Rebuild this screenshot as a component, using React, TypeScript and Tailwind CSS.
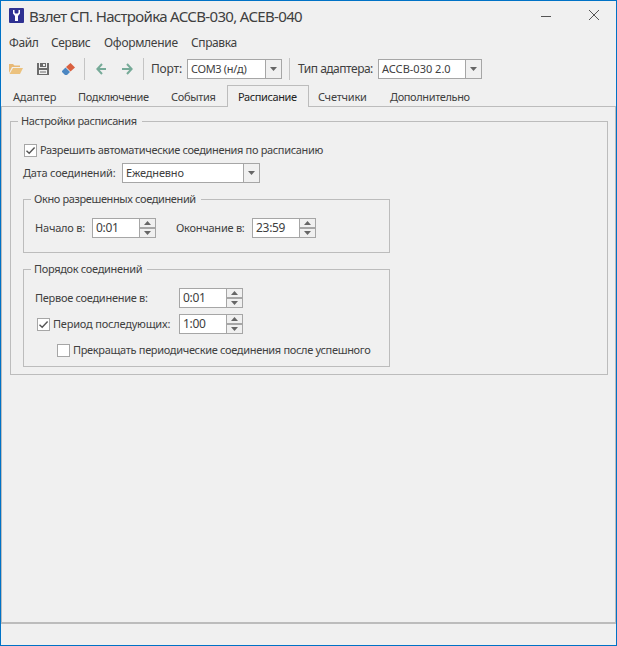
import type { ReactNode } from "react";
import clsx from "clsx";

const Arrow = ({ up }: { up?: boolean }) => (
  <svg width="7" height="4" viewBox="0 0 7 4" className="block shrink-0">
    <path d={up ? "M0 4L3.5 0L7 4Z" : "M0 0H7L3.5 4Z"} fill="#666" />
  </svg>
);

function Combo({ value, className }: { value: string; className: string }) {
  return (
    <div className={clsx("flex h-5 shrink-0 border border-[#a6a6a6] bg-white", className)}>
      <span className="flex-1 whitespace-nowrap pl-[3px] leading-[18px]">{value}</span>
      <span className="flex w-[16px] items-center justify-center border-l border-[#a6a6a6] bg-[#f0f0f0]"><Arrow /></span>
    </div>
  );
}

function Spinner({ value }: { value: string }) {
  return (
    <div className="flex h-5 w-16 shrink-0 border border-[#a6a6a6] bg-white">
      <span className="flex-1 pl-[3px] text-[12px] leading-[18px] tracking-[-0.3px]">{value}</span>
      <span className="flex w-[16px] flex-col border-l border-[#a6a6a6] bg-[#a6a6a6]">
        <span className="flex h-2 items-center justify-center bg-[#f0f0f0]"><Arrow up /></span>
        <span className="mt-[2px] flex h-2 items-center justify-center bg-[#f0f0f0]"><Arrow /></span>
      </span>
    </div>
  );
}

function Check({ on }: { on?: boolean }) {
  return (
    <span className="block size-[13px] shrink-0 border border-[#a6a6a6] bg-white">
      {on && (
        <svg width="11" height="11" viewBox="0 0 11 11" className="block">
          <path d="M1.5 5.7L4.2 8.3L9.6 2.6" fill="none" stroke="#555" strokeWidth="1.4" />
        </svg>
      )}
    </span>
  );
}

function Group({ title, className, legend, children }: { title: string; className: string; legend: string; children: ReactNode }) {
  return (
    <section className={clsx("border border-[#bcbcbc]", className)}>
      <div className={clsx("-mt-[10px] ml-[7px] h-[18px] whitespace-nowrap bg-[#f0f0f0] pl-[3px] leading-[18px]", legend)}>{title}</div>
      {children}
    </section>
  );
}

const tabs = [
  { name: "Адаптер", box: "w-[66px] pl-[12px] tracking-[-0.15px]" },
  { name: "Подключение", box: "w-[94px] pl-[11px]" },
  { name: "События", box: "w-[66px] pl-[10px]" },
  { name: "Расписание", box: "w-[82px] pl-[10px] tracking-[-0.4px]", active: true },
  { name: "Счетчики", box: "w-[71px] pl-[9px] tracking-[-0.2px]" },
  { name: "Дополнительно", box: "pl-[10px] flex-1 tracking-[-0.38px]" },
];

export default function App() {
  return (
    <main className="flex h-[646px] w-[617px] flex-col border border-[#0072c6] bg-[#f0f0f0] font-['Noto_Sans',sans-serif] text-[11px] tracking-[-0.32px] text-[#404040]">
      <header className="flex h-[31px] items-center pb-[2px] pl-2">
        <svg width="15" height="15" viewBox="0 0 15 15" className="shrink-0">
          <rect width="15" height="15" rx="1" fill="#2e3192" />
          <path d="M4 2H5.5V4.6L6.3 5.4H8.7L9.5 4.6V2H11V5.6L9 8V13H6V8L4 5.6Z" fill="#fff" />
        </svg>
        <h1 className="ml-[5px] w-[500px] whitespace-nowrap text-[15px] leading-5 tracking-[-0.67px]">Взлет СП. Настройка АССВ-030, АСЕВ-040</h1>
        <svg width="70" height="12" viewBox="0 0 70 12" className="shrink-0" fill="none" stroke="#555">
          <path d="M12 6.5H22" />
          <path d="M70 0L60 10M60 0L70 10" />
        </svg>
      </header>
      <nav className="flex h-[22px] items-center pl-2 text-[12px] tracking-[-0.4px]">
        <span className="w-[42px]">Файл</span><span className="w-[53px]">Сервис</span><span className="w-[87px] tracking-[-0.3px]">Оформление</span><span>Справка</span>
      </nav>
      <div className="flex h-[30px] items-center pl-2">
        <svg width="14" height="10" viewBox="0 0 14 10" className="shrink-0">
          <path d="M0 9V0H4L5.5 1.5H11V3H3L0 9Z" fill="#e8b976" /><path d="M0.5 10L4 4H14L11 10Z" fill="#ecc27e" />
        </svg>
        <svg width="12" height="12" viewBox="0 0 12 12" className="ml-[14px] shrink-0" fill="#6c6c6c">
          <path fillRule="evenodd" d="M0 0H2V5H10V0H12V12H0ZM2 7V11H10V7Z" /><path fillRule="evenodd" d="M3 0H9V4H3ZM6 1V3H8V1Z" /><path d="M3 8.5H9V9.5H3Z" />
        </svg>
        <svg width="13" height="12" viewBox="0 0 13 12" className="ml-[13px] shrink-0">
          <path d="M8.5 0L13 4.5L8.5 8.5L4 4Z" fill="#d9603f" /><path d="M3.5 4.6L8 9L5 12H3L0 9V8Z" fill="#4c87c2" />
        </svg>
        <i className="ml-[9px] h-[22px] w-px bg-[#c4c4c4]" />
        <svg width="11" height="12" viewBox="0 0 11 12" className="ml-[11px] shrink-0" fill="none" stroke="#76aa98" strokeWidth="2"><path d="M10 6H2M6 1L1.4 6L6 11" /></svg>
        <svg width="11" height="12" viewBox="0 0 11 12" className="ml-[15px] shrink-0" fill="none" stroke="#76aa98" strokeWidth="2"><path d="M0 6H9M5 1L9.6 6L5 11" /></svg>
        <i className="ml-[10px] h-[22px] w-px bg-[#c4c4c4]" />
        <span className="ml-[7px] w-[36px] whitespace-nowrap text-[12px] tracking-[-0.2px]">Порт:</span>
        <Combo value="COM3 (н/д)" className="w-[95px]" />
        <i className="ml-[7px] h-[22px] w-px bg-[#c4c4c4]" />
        <span className="ml-[8px] w-[80px] whitespace-nowrap text-[12px] tracking-[-0.5px]">Тип адаптера:</span>
        <Combo value="АССВ-030 2.0" className="w-[104px] tracking-[0px]" />
      </div>
      <div className="flex h-[23px] items-stretch leading-[21px]">
        {tabs.map((t) => (
          <div key={t.name} className={clsx("mt-px shrink-0 whitespace-nowrap", t.box, t.active ? "border-x border-t border-[#bcbcbc] text-[#222]" : "border-b border-[#bcbcbc] pt-px")}>{t.name}</div>
        ))}
      </div>
      <div className="h-[517px] shrink-0 border-x border-b-2 border-[#bcbcbc] px-2 pt-[14px]">
        <Group title="Настройки расписания" className="h-[254px] w-[598px]" legend="w-[124px] tracking-[-0.4px]">
          <div className="mt-[11px] flex h-[18px] items-center pl-[13px]"><Check on /><span className="ml-[3px] tracking-[-0.34px]">Разрешить автоматические соединения по расписанию</span></div>
          <div className="mt-[4px] flex h-5 items-center pl-3"><span className="w-[99px] tracking-[-0.2px]">Дата соединений:</span><Combo value="Ежедневно" className="w-[138px] tracking-[-0.15px]" /></div>
          <Group title="Окно разрешенных соединений" className="mt-4 ml-3 h-[54px] w-[367px]" legend="w-[170px] tracking-[-0.38px]">
            <div className="mt-[10px] flex h-5 items-center pl-[11px]">
              <span className="w-[57px] tracking-[-0.2px]">Начало в:</span><Spinner value="0:01" />
              <span className="ml-[20px] w-[76px] tracking-[-0.25px]">Окончание в:</span><Spinner value="23:59" />
            </div>
          </Group>
          <Group title="Порядок соединений" className="mt-4 ml-3 h-[98px] w-[367px]" legend="w-[116px]">
            <div className="mt-[10px] flex h-5 items-center pl-[11px]"><span className="w-[144px] tracking-[-0.28px]">Первое соединение в:</span><Spinner value="0:01" /></div>
            <div className="mt-[6px] flex h-5 items-center pl-[13px]"><Check on /><span className="ml-[3px] w-[126px] pt-px tracking-[-0.2px]">Период последующих:</span><Spinner value="1:00" /></div>
            <div className="mt-[6px] flex h-5 items-center pl-[33px]"><Check /><span className="ml-[3px] pt-px">Прекращать периодические соединения после успешного</span></div>
          </Group>
        </Group>
      </div>
    </main>
  );
}
